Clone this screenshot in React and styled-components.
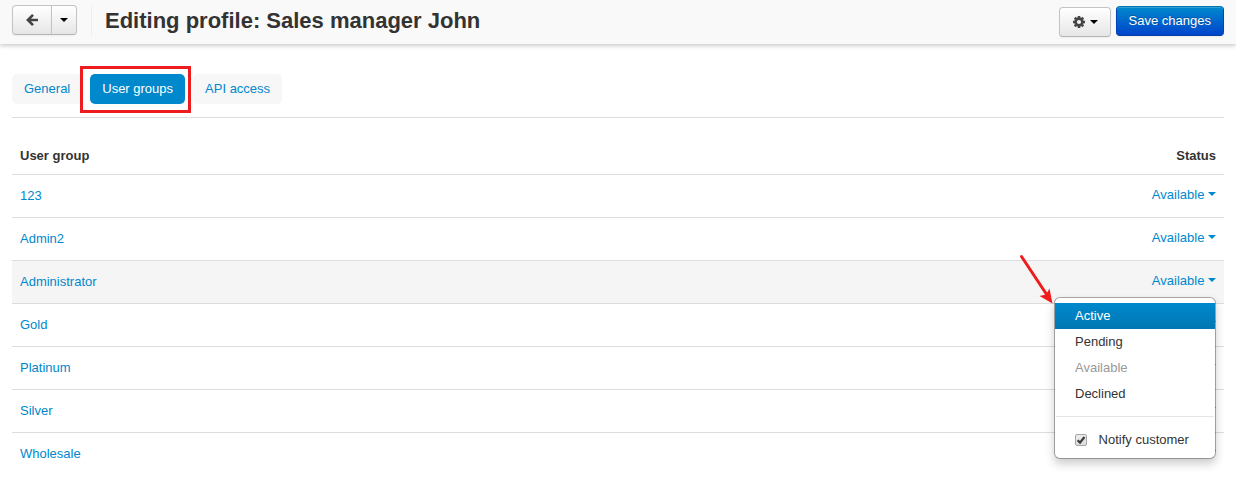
import React, { useState } from "react";
import styled, { createGlobalStyle, css } from "styled-components";

const GlobalStyle = createGlobalStyle`
  *, *::before, *::after { box-sizing: border-box; }
  body {
    margin: 0;
    background: #fff;
    color: #333;
    font: 13px/20px "Liberation Sans", Arial, sans-serif;
  }
  button, input { font: inherit; }
`;

const Header = styled.header`
  display: flex;
  align-items: flex-start;
  height: 44px;
  padding: 0 12px;
  background: #f9f9f9;
  box-shadow: 0 2px 4px rgba(0, 0, 0, 0.2);
`;

const BackGroup = styled.div`
  display: flex;
  margin-top: 5px;
`;

const buttonBase = css`
  display: flex;
  align-items: center;
  justify-content: center;
  height: 30px;
  padding: 0 12px;
  cursor: pointer;
`;

const ToolButton = styled.button`
  ${buttonBase}
  gap: 5px;
  border: 1px solid #c4c4c4;
  border-bottom-color: #b3b3b3;
  border-radius: 4px;
  background: linear-gradient(#fff, #e6e6e6);
  box-shadow: 0 1px 2px rgba(0, 0, 0, 0.05);
  color: #000;

  ${BackGroup} &:first-child {
    width: 40px;
    border-radius: 4px 0 0 4px;
  }
  ${BackGroup} &:last-child {
    width: 26px;
    margin-left: -1px;
    padding: 0;
    border-radius: 0 4px 4px 0;
  }
`;

const PrimaryButton = styled.button`
  ${buttonBase}
  border: 1px solid;
  border-color: #0077b3 #0044b3 #003fa6;
  border-radius: 4px;
  background: linear-gradient(#0088cc, #0044cc);
  box-shadow: inset 0 1px 0 rgba(255, 255, 255, 0.2), 0 1px 2px rgba(0, 0, 0, 0.05);
  color: #fff;
  text-shadow: 0 -1px 0 rgba(0, 0, 0, 0.25);
`;

const Caret = styled.span`
  display: inline-block;
  border: 4px solid transparent;
  border-top-color: currentColor;
  border-bottom: 0;
`;

const Title = styled.h1`
  flex: 1;
  margin: 6px 0 0 14px;
  padding-left: 13px;
  border-left: 1px solid #eee;
  font-size: 22px;
  line-height: 30px;
  white-space: nowrap;
`;

const Actions = styled.div`
  display: flex;
  align-items: flex-end;
  gap: 5px;
  padding-top: 6px;

  ${ToolButton} { padding: 0 12px 0 13px; }
  ${PrimaryButton} { margin-bottom: 1px; }
`;

const Main = styled.main`
  padding: 30px 12px 24px;
`;

const Tabs = styled.nav`
  display: flex;
  gap: 8px;
  padding-bottom: 13px;
  border-bottom: 1px solid #ddd;
`;

const Tab = styled.a`
  padding: 5px 12px;
  border-radius: 5px;
  background: ${(p) => (p.$active ? "#0088cc" : "#f7f7f7")};
  color: ${(p) => (p.$active ? "#fff" : "#0088cc")};
  text-decoration: none;
`;

const Marked = styled.span`
  position: relative;
  display: flex;

  &::before {
    content: "";
    position: absolute;
    inset: -8px -6px -9px -10px;
    border: 3px solid #ee1c1c;
    pointer-events: none;
  }
`;

const GroupTable = styled.table`
  width: 100%;
  margin-top: 20px;
  border-collapse: separate;
  border-spacing: 0;
`;

const HeadCell = styled.th`
  padding: 8px;
  text-align: ${(p) => (p.$end ? "right" : "left")};
`;

const Row = styled.tr`
  background: ${(p) => (p.$highlighted ? "#f5f5f5" : "transparent")};
`;

const Cell = styled.td`
  height: 43px;
  padding: ${(p) => (p.$end ? "10px 8px 12px" : "11px 8px")};
  border-top: 1px solid #ddd;
  vertical-align: top;
`;

const GroupLink = styled.a`
  color: #0088cc;
  text-decoration: none;
`;

const StatusBox = styled.div`
  position: relative;
  display: flex;
  justify-content: flex-end;
`;

const StatusButton = styled.button`
  height: 20px;
  padding: 0;
  border: 0;
  background: none;
  color: #0088cc;
  line-height: 20px;
  cursor: pointer;

  ${Caret} { margin-top: 7px; vertical-align: top; }
`;

const Menu = styled.div`
  position: absolute;
  z-index: 2;
  top: 26px;
  right: 0;
  width: 162px;
  padding: 5px 0;
  border: 1px solid rgba(0, 0, 0, 0.3);
  border-radius: 6px;
  background: #fff;
  background-clip: padding-box;
  box-shadow: 0 5px 10px rgba(0, 0, 0, 0.2);
`;

const MenuItem = styled.button`
  display: block;
  width: 100%;
  padding: 3px 20px;
  border: 0;
  background: ${(p) => (p.$active ? "linear-gradient(#0088cc, #0077b3)" : "none")};
  color: ${(p) => (p.$active ? "#fff" : "#333")};
  line-height: 20px;
  text-align: left;

  &:disabled { color: #999; }
`;

const Divider = styled.hr`
  height: 1px;
  margin: 9px 1px 10px;
  border: 0;
  background: #e5e5e5;
`;

const NotifyLabel = styled.label`
  display: flex;
  align-items: center;
  gap: 8px;
  padding: 3px 20px;
  white-space: pre;
`;

const CheckHolder = styled.span`
  display: grid;
  width: 12px;
  height: 12px;

  > * { grid-area: 1 / 1; }
  svg { pointer-events: none; opacity: 0; }
  input:checked + svg { opacity: 1; }
`;

const Checkbox = styled.input`
  appearance: none;
  width: 12px;
  height: 12px;
  margin: 0;
  border: 1px solid #a6a6a6;
  border-radius: 2px;
  background: linear-gradient(#eee, #ddd);
`;

const Pointer = styled.svg`
  position: absolute;
  z-index: 3;
  top: -18px;
  right: 162px;
`;

function BackIcon() {
  return (
    <svg width="12" height="12" viewBox="0 0 12 12" fill="none" stroke="#444" strokeWidth="2.6" aria-hidden="true">
      <path d="M7 .9 1.900 6 7 11.100M2 6h10" />
    </svg>
  );
}

function GearIcon() {
  return (
    <svg width="12" height="12" viewBox="-6 -6 12 12" aria-hidden="true">
      <g fill="none" stroke="#444">
        <circle r="3.4" strokeWidth="2.6" />
        {[0, 45, 90, 135, 180, 225, 270, 315].map((angle) => (
          <path key={angle} d="M0-4V-6" strokeWidth="2.6" transform={`rotate(${angle})`} />
        ))}
      </g>
    </svg>
  );
}

const groups = ["123", "Admin2", "Administrator", "Gold", "Platinum", "Silver", "Wholesale"];

function StatusMenu() {
  const [notify, setNotify] = useState(true);
  return (
    <>
      <Pointer width="36" height="52" viewBox="0 0 36 52" aria-hidden="true">
        <path d="M3.500 3.500 29 42" stroke="#ee1c1c" strokeWidth="3" strokeLinecap="round" />
        <path d="M34.500 50.500 21.500 43 28 41.500 31.500 35.500Z" fill="#ee1c1c" />
      </Pointer>
      <Menu>
        <MenuItem type="button" $active>Active</MenuItem>
        <MenuItem type="button">Pending</MenuItem>
        <MenuItem type="button" disabled>Available</MenuItem>
        <MenuItem type="button">Declined</MenuItem>
        <Divider />
        <NotifyLabel>
          <CheckHolder>
            <Checkbox type="checkbox" checked={notify} onChange={(e) => setNotify(e.target.checked)} />
            <svg width="12" height="12" viewBox="0 0 12 12" aria-hidden="true">
              <path d="M2.600 6.200 5 8.600 9.500 3" fill="none" stroke="#3c3c3c" strokeWidth="2.3" />
            </svg>
          </CheckHolder>
          {" Notify customer"}
        </NotifyLabel>
      </Menu>
    </>
  );
}

export default function App() {
  return (
    <>
      <GlobalStyle />
      <Header>
        <BackGroup>
          <ToolButton type="button" aria-label="Back"><BackIcon /></ToolButton>
          <ToolButton type="button" aria-label="Recent pages"><Caret /></ToolButton>
        </BackGroup>
        <Title>Editing profile: Sales manager John</Title>
        <Actions>
          <ToolButton type="button" aria-label="Tools"><GearIcon /><Caret /></ToolButton>
          <PrimaryButton type="button">Save changes</PrimaryButton>
        </Actions>
      </Header>
      <Main>
        <Tabs>
          <Tab href="#general">General</Tab>
          <Marked><Tab href="#groups" $active>User groups</Tab></Marked>
          <Tab href="#api">API access</Tab>
        </Tabs>
        <GroupTable>
          <thead>
            <tr>
              <HeadCell>User group</HeadCell>
              <HeadCell $end>Status</HeadCell>
            </tr>
          </thead>
          <tbody>
            {groups.map((name) => {
              const open = name === "Administrator";
              return (
                <Row key={name} $highlighted={open}>
                  <Cell><GroupLink href="#group">{name}</GroupLink></Cell>
                  <Cell $end>
                    <StatusBox>
                      <StatusButton type="button" aria-expanded={open}>Available <Caret /></StatusButton>
                      {open && <StatusMenu />}
                    </StatusBox>
                  </Cell>
                </Row>
              );
            })}
          </tbody>
        </GroupTable>
      </Main>
    </>
  );
}
